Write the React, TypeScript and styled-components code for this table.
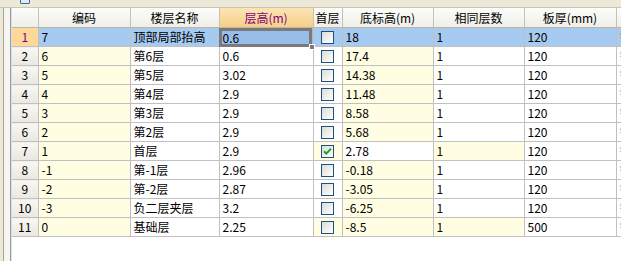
import React from "react";
import styled, { createGlobalStyle } from "styled-components";

type Floor = {
  code: string;
  name: string;
  height: string;
  first: boolean;
  base: string;
  same: string;
  thick: string;
};

const floors: Floor[] = [
  { code: "7", name: "顶部局部抬高", height: "0.6", first: false, base: "18", same: "1", thick: "120" },
  { code: "6", name: "第6层", height: "0.6", first: false, base: "17.4", same: "1", thick: "120" },
  { code: "5", name: "第5层", height: "3.02", first: false, base: "14.38", same: "1", thick: "120" },
  { code: "4", name: "第4层", height: "2.9", first: false, base: "11.48", same: "1", thick: "120" },
  { code: "3", name: "第3层", height: "2.9", first: false, base: "8.58", same: "1", thick: "120" },
  { code: "2", name: "第2层", height: "2.9", first: false, base: "5.68", same: "1", thick: "120" },
  { code: "1", name: "首层", height: "2.9", first: true, base: "2.78", same: "1", thick: "120" },
  { code: "-1", name: "第-1层", height: "2.96", first: false, base: "-0.18", same: "1", thick: "120" },
  { code: "-2", name: "第-2层", height: "2.87", first: false, base: "-3.05", same: "1", thick: "120" },
  { code: "-3", name: "负二层夹层", height: "3.2", first: false, base: "-6.25", same: "1", thick: "120" },
  { code: "0", name: "基础层", height: "2.25", first: false, base: "-8.5", same: "1", thick: "500" },
];

const columns = [
  { title: "", width: 26 },
  { title: "编码", width: 92 },
  { title: "楼层名称", width: 89 },
  { title: "层高(m)", width: 94, active: true },
  { title: "首层", width: 29 },
  { title: "底标高(m)", width: 91 },
  { title: "相同层数", width: 91 },
  { title: "板厚(mm)", width: 92 },
  { title: "", width: 60 },
];

const GlobalStyle = createGlobalStyle`
  html, body {
    margin: 0;
    padding: 0;
    background: #ffffff;
    overflow: hidden;
  }
  body {
    font-family: "Noto Sans CJK SC", "DejaVu Sans", sans-serif;
    font-size: 12px;
    color: #000;
  }
`;

const Page = styled.div`
  width: 621px;
  height: 261px;
  display: flex;
  flex-direction: column;
  overflow: hidden;
`;

const Toolbar = styled.div`
  height: 7px;
  flex: none;
  background: #ece9d8;
  border-bottom: 1px solid #c9c6b6;
  position: relative;
  overflow: hidden;
`;

const ToolIcon = styled.div`
  position: absolute;
  left: 20px;
  top: -6px;
  width: 8px;
  height: 8px;
  border: 1px solid #3a6ea5;
  border-radius: 1px;
  background: #dfe9f5;
`;

const Body = styled.div`
  flex: 1;
  display: flex;
  min-height: 0;
`;

const Rail = styled.div`
  width: 3px;
  flex: none;
  background: #ece9d8;
  border-right: 1px solid #a7a596;
`;

const RailGap = styled.div`
  width: 6px;
  flex: none;
  background: #f7f6f1;
  border-right: 1px solid #8a9db5;
`;

const GridArea = styled.div`
  flex: 1;
  overflow: hidden;
  background: #fff;
  border-left: 1px solid #e2e0d6;
`;

const Table = styled.table`
  border-collapse: collapse;
  table-layout: fixed;
  width: ${columns.reduce((s, c) => s + c.width, 0)}px;
`;

const HeadCell = styled.th<{ $active?: boolean }>`
  height: 19px;
  padding: 0;
  font-weight: normal;
  text-align: center;
  white-space: nowrap;
  overflow: hidden;
  color: ${(p) => (p.$active ? "#800080" : "#000")};
  background: ${(p) =>
    p.$active
      ? "linear-gradient(#fbe4b4, #f7cf87)"
      : "linear-gradient(#fcfcfa, #efeee8)"};
  border-right: 1px solid #c4c2b8;
  border-bottom: 1px solid #b9b7ac;
  line-height: 18px;
`;

const RowHead = styled.td<{ $current?: boolean }>`
  height: 18px;
  padding: 0;
  text-align: center;
  color: ${(p) => (p.$current ? "#800080" : "#000")};
  background: ${(p) =>
    p.$current ? "#fdd898" : "linear-gradient(#f8f7f3, #e9e7df)"};
  border-right: 1px solid #c0c0c0;
  border-bottom: 1px solid #c0c0c0;
  line-height: 18px;
`;

type Tone = "plain" | "locked" | "selected" | "active";

const Cell = styled.td<{ $tone: Tone; $muted?: boolean; $center?: boolean }>`
  height: 18px;
  padding: 0 0 0 ${(p) => (p.$center || p.$tone === "active" ? 0 : 3)}px;
  white-space: nowrap;
  overflow: ${(p) => (p.$tone === "active" ? "visible" : "hidden")};
  line-height: 18px;
  text-align: ${(p) => (p.$center ? "center" : "left")};
  color: ${(p) => (p.$muted ? "#808080" : "#000")};
  background: ${(p) =>
    p.$tone === "selected"
      ? "#a6caf0"
      : p.$tone === "active"
      ? "#98bde8"
      : p.$tone === "locked"
      ? "#fffee3"
      : "#ffffff"};
  border-right: 1px solid #c0c0c0;
  border-bottom: 1px solid #c0c0c0;
`;

const ActiveFrame = styled.div`
  position: relative;
  box-sizing: border-box;
  height: 19px;
  margin: -1px 1px -1px -1px;
  padding-left: 1px;
  border: 3px solid #7a7a7a;
  line-height: 13px;
  background: #98bde8;
`;

const Handle = styled.span`
  position: absolute;
  z-index: 2;
  right: -6px;
  bottom: -6px;
  width: 4px;
  height: 4px;
  background: #7a7a7a;
  border: 1px solid #fff;
`;

const Box = styled.span`
  display: inline-block;
  vertical-align: middle;
  width: 11px;
  height: 11px;
  margin-top: -2px;
  border: 1px solid #1c5180;
  background: linear-gradient(135deg, #dcdcd6, #ffffff);
  position: relative;
`;

const Check = () => (
  <svg width="9" height="9" viewBox="0 0 9 9" style={{ position: "absolute", left: 1, top: 1 }}>
    <path d="M1 4.2 L3.3 6.6 L8 1.6" fill="none" stroke="#21a121" strokeWidth="2" />
  </svg>
);

const CheckBox = ({ checked }: { checked: boolean }) => (
  <Box>{checked ? <Check /> : null}</Box>
);

export default function App() {
  return (
    <Page>
      <GlobalStyle />
      <Toolbar>
        <ToolIcon />
      </Toolbar>
      <Body>
        <Rail />
        <RailGap />
        <GridArea>
          <Table>
            <colgroup>
              {columns.map((c, i) => (
                <col key={i} style={{ width: c.width }} />
              ))}
            </colgroup>
            <thead>
              <tr>
                {columns.map((c, i) => (
                  <HeadCell key={i} $active={c.active}>
                    {c.title}
                  </HeadCell>
                ))}
              </tr>
            </thead>
            <tbody>
              {floors.map((f, i) => {
                const sel = i === 0;
                const last = i === floors.length - 1;
                const tone = (locked: boolean): Tone =>
                  sel ? "selected" : locked ? "locked" : "plain";
                return (
                  <tr key={i}>
                    <RowHead $current={sel}>{i + 1}</RowHead>
                    <Cell $tone={tone(true)}>{f.code}</Cell>
                    <Cell $tone={tone(false)}>{f.name}</Cell>
                    {sel ? (
                      <Cell $tone="active">
                        <ActiveFrame>
                          {f.height}
                          <Handle />
                        </ActiveFrame>
                      </Cell>
                    ) : (
                      <Cell $tone="plain">{f.height}</Cell>
                    )}
                    <Cell $tone={tone(f.first || last)} $center>
                      <CheckBox checked={f.first} />
                    </Cell>
                    <Cell $tone={tone(!f.first)}>{f.base}</Cell>
                    <Cell $tone={tone(f.first || last)}>{f.same}</Cell>
                    <Cell $tone={tone(false)}>{f.thick}</Cell>
                    <Cell $tone={tone(false)} $muted>
                      钢筋混凝土
                    </Cell>
                  </tr>
                );
              })}
            </tbody>
          </Table>
        </GridArea>
      </Body>
    </Page>
  );
}
